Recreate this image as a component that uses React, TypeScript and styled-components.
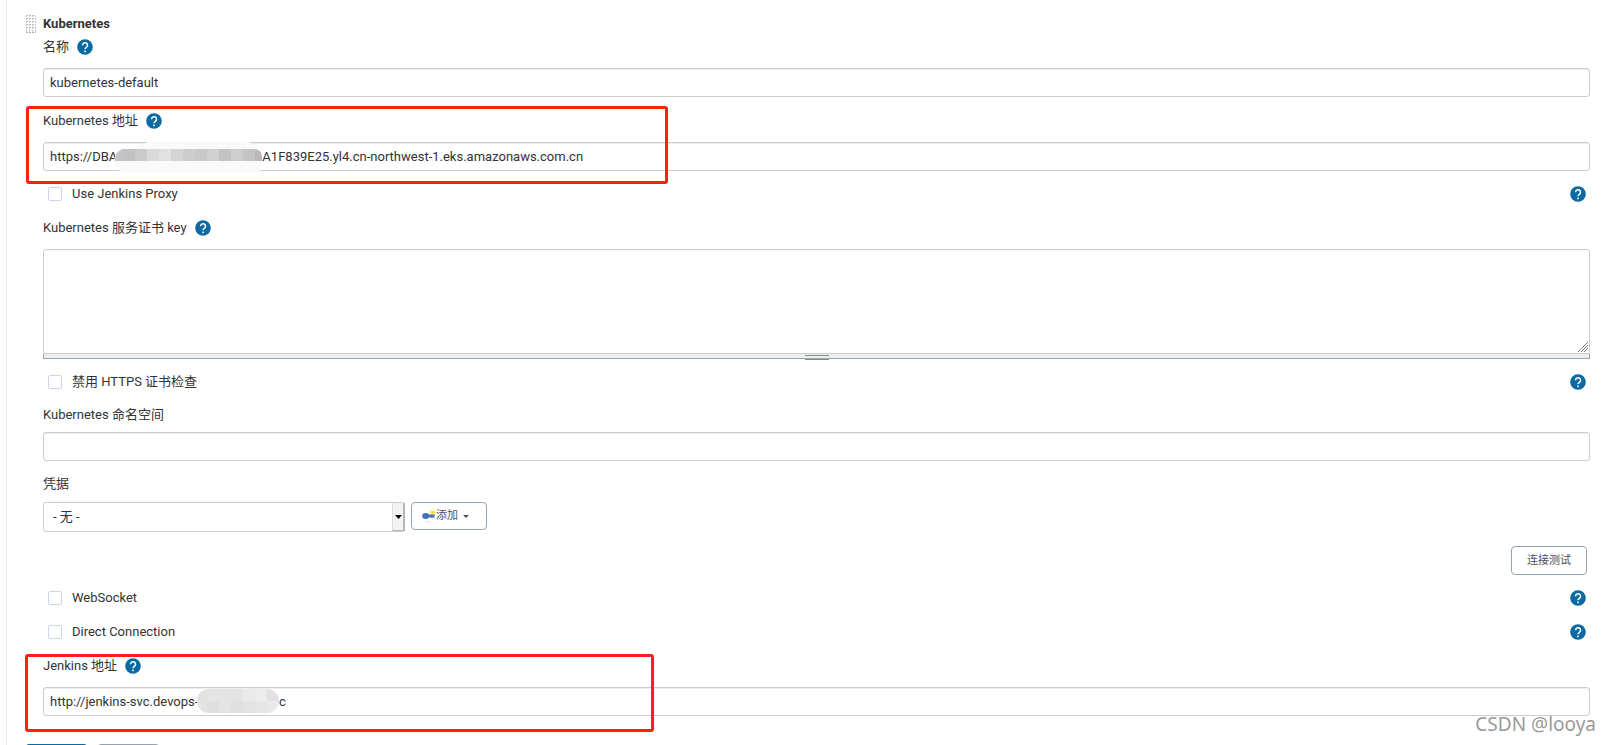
import React, { useState } from "react";
import styled, { createGlobalStyle } from "styled-components";

const GlobalStyle = createGlobalStyle`
  * { box-sizing: border-box; }
  body {
    margin: 0;
    background: #fff;
    color: #333;
    font: 13px/20px Roboto, "Noto Sans CJK SC", sans-serif;
  }
  button, input, select, textarea { font: inherit; color: inherit; }
`;

const Page = styled.main`
  height: 100vh;
  overflow: hidden;
  margin-left: 6px;
  padding: 14px 21px 0 18px;
  border-left: 1px solid #e6ecef;
  position: relative;
`;

const Section = styled.section`
  display: grid;
  grid-template-columns: 10px minmax(0, 1fr);
  gap: 7px;
  padding-left: 1px;
`;

const DragHandle = styled.svg`
  width: 10px;
  height: 18px;
  margin-top: 1px;
`;

const Form = styled.form`
  display: flex;
  flex-direction: column;
`;

const Title = styled.h2`
  margin: 0 0 3px;
  font-size: 13px;
  line-height: 20px;
  font-weight: 700;
`;

const Field = styled.div<{ $gap?: number; $after?: number }>`
  position: relative;
  display: flex;
  flex-direction: column;
  gap: ${(p) => p.$gap ?? 11}px;
  margin-bottom: ${(p) => p.$after ?? 13}px;
`;

const LabelRow = styled.div`
  display: flex;
  align-items: center;
  gap: 8px;
  height: 20px;
`;

const HelpButton = styled.button`
  display: block;
  width: 16px;
  height: 16px;
  padding: 0;
  border: 0;
  background: none;
  svg { display: block; }
`;

const ControlBox = styled.div`
  position: relative;
  display: flex;
`;

const TextInput = styled.input`
  flex: 1;
  min-width: 0;
  height: 29px;
  padding: 0 6px;
  border: 1px solid #ccc;
  border-radius: 3px;
  background: #fff;
  box-shadow: inset 0 1px 1px rgba(0, 0, 0, 0.075);
  outline: 0;
`;

const TextArea = styled.textarea`
  display: block;
  width: 100%;
  height: 105px;
  padding: 6px;
  border: 1px solid #ccc;
  border-radius: 3px 3px 0 0;
  resize: vertical;
  outline: 0;
  &::-webkit-resizer { background: transparent; }
`;

const TextAreaBox = styled.div`
  position: relative;
`;

const Grip = styled.svg`
  position: absolute;
  right: 1px;
  bottom: 6px;
  background: #fff;
  pointer-events: none;
`;

const ResizeBar = styled.div`
  display: flex;
  justify-content: center;
  height: 5px;
  border: 1px solid #98a7b0;
  border-top: 0;
  background: #eaeff2;
  &::after {
    content: "";
    width: 24px;
    height: 3px;
    margin-top: 1px;
    border: solid #848f86;
    border-width: 1px 0;
  }
`;

const CheckRow = styled.div<{ $after?: number }>`
  display: flex;
  align-items: center;
  justify-content: space-between;
  height: 20px;
  padding: 0 4px 0 5px;
  margin-bottom: ${(p) => p.$after ?? 14}px;
`;

const CheckLabel = styled.label`
  display: flex;
  align-items: center;
  gap: 10px;
`;

const CheckBox = styled.input`
  appearance: none;
  width: 14px;
  height: 14px;
  margin: 0;
  border: 1px solid #ccd5e8;
  border-radius: 2px;
  background: #fff;
  &:checked { background: #0b6aa2; }
`;

const CredentialRow = styled.div`
  display: flex;
  gap: 6px;
`;

const SelectBox = styled.div`
  position: relative;
  width: 362px;
`;

const Select = styled.select`
  appearance: none;
  display: block;
  width: 100%;
  height: 30px;
  padding: 0 20px 0 9px;
  border: 1px solid #ccc;
  border-radius: 3px;
  background: #fff;
  outline: 0;
`;

const SelectArrow = styled.span`
  position: absolute;
  top: 1px;
  right: 0;
  bottom: 1px;
  display: flex;
  align-items: center;
  justify-content: center;
  width: 13px;
  border: solid #b5b5b5;
  border-width: 0 2px 1px 1px;
  border-left-color: #dcdcdc;
  background: #f2f3f5;
  pointer-events: none;
`;

const Button = styled.button<{ $primary?: boolean }>`
  display: flex;
  align-items: center;
  justify-content: center;
  height: 29px;
  padding: 0 15px;
  border: 1px solid ${(p) => (p.$primary ? "#0b6aa2" : "#94a3ad")};
  border-radius: 4px;
  background: ${(p) => (p.$primary ? "#0b6aa2" : "#fff")};
  color: #4a5160;
  font-size: 11px;
`;

const AddButton = styled(Button)`
  justify-content: flex-start;
  width: 76px;
  padding: 0 10px;
  height: 28px;
  span + svg { margin-left: 5px; }
`;

const TestRow = styled.div`
  display: flex;
  justify-content: flex-end;
  padding-right: 3px;
  margin: 1px 0 13px;
`;

const Footer = styled.footer`
  display: flex;
  gap: 9px;
  margin-top: 15px;
`;

const FooterButton = styled(Button)`
  width: 63px;
`;

const Highlight = styled.div<{ $top: number; $left: number; $width: number }>`
  position: absolute;
  top: ${(p) => p.$top}px;
  left: ${(p) => p.$left}px;
  width: ${(p) => p.$width}px;
  height: 78px;
  border: 3px solid #ff1f12;
  border-radius: 3px;
  pointer-events: none;
`;

const Redaction = styled.svg<{ $top: number; $left: number }>`
  position: absolute;
  top: ${(p) => p.$top}px;
  left: ${(p) => p.$left}px;
  pointer-events: none;
`;

const Watermark = styled.div`
  position: absolute;
  right: 15px;
  bottom: 9px;
  color: #999;
  font: 19px/24px "Noto Sans", sans-serif;
  text-shadow: 1px 1px 0 #fff;
`;

function Help({ about }: { about: string }) {
  return (
    <HelpButton type="button" aria-label={about}>
      <svg width="16" height="16" viewBox="0 0 16 16">
        <circle cx="8" cy="8" r="7.8" fill="#0b6aa2" />
        <path
          d="M5.5 6.2a2.5 2.5 0 1 1 4 2C8.5 8.9 8 9.2 8 10.3"
          fill="none"
          stroke="#fff"
          strokeWidth="1.5"
        />
        <rect x="7.2" y="11.6" width="1.6" height="1.6" fill="#fff" />
      </svg>
    </HelpButton>
  );
}

function Label({ id, text, help }: { id: string; text: string; help?: boolean }) {
  return (
    <LabelRow>
      <label htmlFor={id}>{text}</label>
      {help && <Help about={text} />}
    </LabelRow>
  );
}

function Check({ text, after }: { text: string; after?: number }) {
  return (
    <CheckRow $after={after}>
      <CheckLabel>
        <CheckBox type="checkbox" />
        {text}
      </CheckLabel>
      <Help about={text} />
    </CheckRow>
  );
}

function KeyIcon() {
  return (
    <svg width="14" height="14" viewBox="0 0 14 14">
      <circle cx="10.6" cy="4" r="3.2" fill="#fbf08a" />
      <circle cx="11" cy="4" r="1.8" fill="#f4e04a" />
      <ellipse cx="6" cy="12.6" rx="4" ry="0.8" fill="#ececec" />
      <path d="M5 5.6h7.6v2.8H11l-1 .8-1-.8H5z" fill="#4a78bd" />
      <ellipse cx="3.6" cy="7" rx="3.4" ry="3" fill="#3f6db5" />
      <ellipse cx="3.2" cy="6.4" rx="1.4" ry="0.8" fill="#4f7cc0" />
    </svg>
  );
}

const urlTones = ["#cfcfcf", "#c5c5c5", "#c2c2c2", "#cbcbcb", "#d9d9d9", "#e1e1e1", "#d5d5d5", "#cdcdcd", "#c9c9c9", "#d0d0d0", "#c3c3c3", "#cecece", "#c4c4c4", "#b9b9b9"];
const hostTones = [
  ["#e1e1e1", "#e5e5e5", "#e5e5e5", "#e4e4e4", "#eaeaea", "#ececec", "#e2e2e2"],
  ["#e3e3e3", "#dfdfdf", "#e4e4e4", "#e0e0e0", "#e3e3e3", "#e6e6e6", "#e9e9e9"],
];

function UrlMosaic() {
  return (
    <Redaction $top={-1} $left={67} width="156" height="33" viewBox="0 0 156 33">
      <path d="M4 20C4 12 16 10 28 6C36 0 44 0 52 0H132C142 1 150 5 152 12V24C152 28 150 31 146 32H16C10 31 5 27 4 20Z" fill="#fafafa" />
      <clipPath id="url-clip">
        <path d="M5 20Q4 12 12 8H144Q152 9 152 15V20Z" />
      </clipPath>
      <g clipPath="url(#url-clip)">
        {urlTones.map((tone, i) => (
          <rect key={i} x={i * 12 - 11} y="8" width="12" height="12" fill={tone} />
        ))}
      </g>
    </Redaction>
  );
}

function HostMosaic() {
  return (
    <Redaction $top={2} $left={149} width="88" height="25" viewBox="0 0 88 25">
      <clipPath id="host-clip">
        <rect x="5" y="0" width="82" height="24" rx="12" />
      </clipPath>
      <g clipPath="url(#host-clip)">
        {hostTones.map((row, y) =>
          row.map((tone, x) => (
            <rect key={`${x}-${y}`} x={x * 12 + 3} y={y * 12} width="15" height="12" fill={tone} />
          )),
        )}
      </g>
    </Redaction>
  );
}

const blank = (count: number) => "\u00a0".repeat(count);

export default function App() {
  const [name, setName] = useState("kubernetes-default");
  const [url, setUrl] = useState(
    `https://DBA${blank(45)}A1F839E25.yl4.cn-northwest-1.eks.amazonaws.com.cn`,
  );
  const [jenkins, setJenkins] = useState(`http://jenkins-svc.devops-${blank(25)}c`);

  return (
    <>
      <GlobalStyle />
      <Page>
        <Section>
          <DragHandle viewBox="0 0 10 18">
            <path
              d="M0 .5H10M0 3.5H10M0 6.5H10M0 9.5H10M0 12.5H10M0 17.5H10"
              stroke="#b0b0b0"
              strokeDasharray="2 1"
            />
            <path d="M.5 0V18M3.5 0V18M6.5 0V18M9.5 0V18" stroke="#c8c8c8" strokeDasharray="2 1" />
          </DragHandle>
          <Form onSubmit={(e) => e.preventDefault()}>
            <Title>Kubernetes</Title>
            <Field $after={14}>
              <Label id="name" text="名称" help />
              <ControlBox>
                <TextInput id="name" value={name} onChange={(e) => setName(e.target.value)} />
              </ControlBox>
            </Field>
            <Field>
              <Label id="url" text="Kubernetes 地址" help />
              <ControlBox>
                <TextInput id="url" value={url} onChange={(e) => setUrl(e.target.value)} />
                <UrlMosaic />
              </ControlBox>
              <Highlight $top={-5} $left={-17} $width={642} />
            </Field>
            <Check text="Use Jenkins Proxy" />
            <Field>
              <Label id="cert" text="Kubernetes 服务证书 key" help />
              <TextAreaBox>
                <TextArea id="cert" />
                <Grip width="12" height="12" viewBox="0 0 12 12">
                  <path d="M1 11L11 1M4 11L11 4M7 11L11 7" stroke="#777" strokeWidth="1" />
                </Grip>
                <ResizeBar />
              </TextAreaBox>
            </Field>
            <Check text="禁用 HTTPS 证书检查" after={13} />
            <Field $gap={7}>
              <Label id="namespace" text="Kubernetes 命名空间" />
              <ControlBox>
                <TextInput id="namespace" />
              </ControlBox>
            </Field>
            <Field $gap={8}>
              <Label id="credential" text="凭据" />
              <CredentialRow>
                <SelectBox>
                  <Select id="credential">
                    <option>- 无 -</option>
                  </Select>
                  <SelectArrow>
                    <svg width="7" height="4" viewBox="0 0 7 4">
                      <path d="M0 0H7L3.5 4Z" fill="#000" />
                    </svg>
                  </SelectArrow>
                </SelectBox>
                <AddButton type="button">
                  <KeyIcon />
                  <span>添加</span>
                  <svg width="6" height="3" viewBox="0 0 6 3">
                    <path d="M0 0H6L3 3Z" fill="#4a5160" />
                  </svg>
                </AddButton>
              </CredentialRow>
            </Field>
            <TestRow>
              <Button type="button">连接测试</Button>
            </TestRow>
            <Check text="WebSocket" />
            <Check text="Direct Connection" />
            <Field>
              <Label id="jenkins" text="Jenkins 地址" help />
              <ControlBox>
                <TextInput id="jenkins" value={jenkins} onChange={(e) => setJenkins(e.target.value)} />
                <HostMosaic />
              </ControlBox>
              <Highlight $top={-2} $left={-18} $width={629} />
            </Field>
          </Form>
        </Section>
        <Footer>
          <FooterButton type="button" $primary aria-label="保存" />
          <FooterButton type="button" aria-label="应用" />
        </Footer>
        <Watermark>CSDN @looya</Watermark>
      </Page>
    </>
  );
}
